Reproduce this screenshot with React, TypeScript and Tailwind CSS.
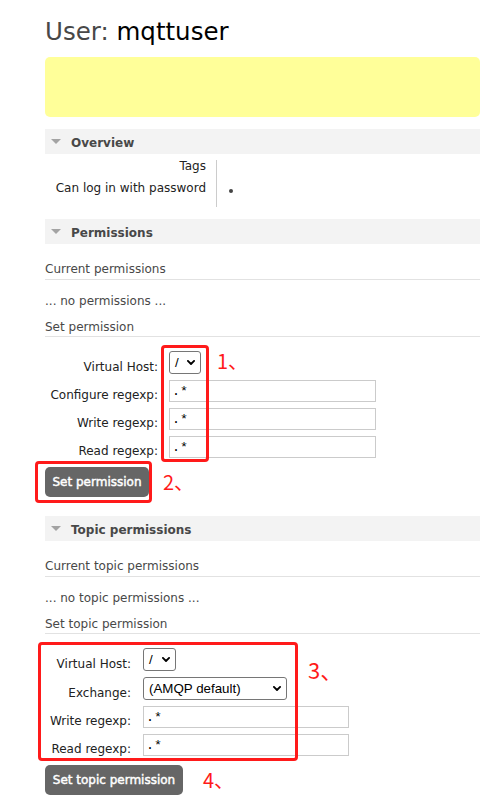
import React from "react";

const Chevron = () => (
  <svg width="8" height="5" viewBox="0 0 8 5" className="shrink-0">
    <path d="M0.9 0.9 L4 4 L7.1 0.9" stroke="#000" strokeWidth="1.8" fill="none" strokeLinecap="round" strokeLinejoin="round" />
  </svg>
);

function SectionHeader({ title }: { title: string }) {
  return (
    <div className="flex h-[25px] items-start bg-[#f3f3f3]">
      <svg className="ml-[6px] mr-[10px] self-center" width="10" height="5" viewBox="0 0 10 5">
        <path d="M0 0H10L5 5Z" fill="#a3a3a3" />
      </svg>
      <span className="font-bold leading-[28px] text-[#484848]">{title}</span>
    </div>
  );
}

function RegexInput({ w }: { w: string }) {
  return (
    <input
      readOnly
      value=".*"
      className={`${w} h-[22px] border border-[#cbcbcb] bg-white px-[2px] font-['Liberation_Mono',monospace] text-[13.33px] text-black outline-none`}
    />
  );
}

export default function App() {
  return (
    <div className="min-h-[811px] w-[480px] overflow-hidden bg-white pl-[45px] font-['DejaVu_Sans',sans-serif] text-[12px] text-[#222]">
      <h1 className="pt-[17px] text-[24.5px] leading-[30px] font-normal whitespace-nowrap">
        <span className="text-[#484848]">User: </span>
        <span className="text-black">mqttuser</span>
      </h1>

      <div className="mt-[10px] h-[60px] rounded-[5px] bg-[#ffff99]" />

      <div className="mt-[12px]">
        <SectionHeader title="Overview" />
      </div>
      <div className="mt-[6px] flex">
        <div className="w-[172px] border-r border-[#cccccc] pr-[10px] pb-[13px] text-right text-[#222]">
          <div className="leading-[12px]">Tags</div>
          <div className="mt-[10px] leading-[12px] whitespace-nowrap">Can log in with password</div>
        </div>
        <div className="pl-[12px] pt-[29px]">
          <div className="h-[3.5px] w-[3.5px] rounded-full bg-[#444]" />
        </div>
      </div>

      <div className="mt-[12px]">
        <SectionHeader title="Permissions" />
      </div>
      <h3 className="mt-[15px] border-b border-[#e2e2e2] pt-[1px] leading-[19px] text-[#484848]">Current permissions</h3>
      <p className="mt-[11px] leading-[20px] text-[#484848]">... no permissions ...</p>
      <h3 className="mt-[5px] border-b border-[#e2e2e2] pt-[3px] leading-[17px] text-[#484848]">Set permission</h3>

      <div className="relative mt-[14px] flex flex-col">
        <div className="flex items-center">
          <div className="w-[113px] pt-[8px] text-right leading-[14px]">Virtual Host:</div>
          <div className="ml-[11px] flex h-[23px] w-[32px] items-center justify-between rounded-[3px] border border-[#767676] bg-white pl-[5px] pr-[5px] font-['Liberation_Sans',Arial,sans-serif] text-[13.33px] text-black">
            <span>/</span>
            <Chevron />
          </div>
        </div>
        <div className="mt-[6px] flex items-center">
          <div className="w-[113px] pt-[8px] text-right leading-[14px] whitespace-nowrap">Configure regexp:</div>
          <div className="ml-[11px]">
            <RegexInput w="w-[207px]" />
          </div>
        </div>
        <div className="mt-[6px] flex items-center">
          <div className="w-[113px] pt-[8px] text-right leading-[14px]">Write regexp:</div>
          <div className="ml-[11px]">
            <RegexInput w="w-[207px]" />
          </div>
        </div>
        <div className="mt-[6px] flex items-center">
          <div className="w-[113px] pt-[8px] text-right leading-[14px]">Read regexp:</div>
          <div className="ml-[11px]">
            <RegexInput w="w-[207px]" />
          </div>
        </div>
        <div className="pointer-events-none absolute left-[116px] top-[-6px] h-[117px] w-[48px] rounded-[4px] border-[3px] border-[#ff1a1a]" />
        <span className="absolute left-[172px] top-[0px] font-['Noto_Sans_CJK_SC',sans-serif] text-[20px] leading-[20px] text-[#ff1a1a] whitespace-nowrap">1、</span>
      </div>

      <div className="relative mt-[9px] flex">
        <button className="h-[30px] w-[104px] rounded-[5px] bg-[#666666] text-center text-[12px] leading-[30px] text-white [-webkit-text-stroke:0.45px_white]">
          Set permission
        </button>
        <div className="pointer-events-none absolute left-[-10px] top-[-6px] h-[42px] w-[117px] rounded-[4px] border-[3px] border-[#ff1a1a]" />
        <span className="absolute left-[118px] top-[5px] font-['Noto_Sans_CJK_SC',sans-serif] text-[20px] leading-[20px] text-[#ff1a1a] whitespace-nowrap">2、</span>
      </div>

      <div className="mt-[19px]">
        <SectionHeader title="Topic permissions" />
      </div>
      <h3 className="mt-[15px] border-b border-[#e2e2e2] pt-[1px] leading-[19px] text-[#484848]">Current topic permissions</h3>
      <p className="mt-[11px] leading-[20px] text-[#484848]">... no topic permissions ...</p>
      <h3 className="mt-[5px] border-b border-[#e2e2e2] pt-[3px] leading-[17px] text-[#484848]">Set topic permission</h3>

      <div className="relative mt-[14px] flex flex-col">
        <div className="flex items-center">
          <div className="w-[86px] pt-[8px] text-right leading-[14px]">Virtual Host:</div>
          <div className="ml-[12px] flex h-[23px] w-[33px] items-center justify-between rounded-[3px] border border-[#767676] bg-white pl-[5px] pr-[5px] font-['Liberation_Sans',Arial,sans-serif] text-[13.33px] text-black">
            <span>/</span>
            <Chevron />
          </div>
        </div>
        <div className="mt-[6px] flex items-center">
          <div className="w-[86px] pt-[8px] text-right leading-[14px]">Exchange:</div>
          <div className="ml-[12px] flex h-[23px] w-[144px] items-center justify-between rounded-[3px] border border-[#767676] bg-white pl-[5px] pr-[5px] font-['Liberation_Sans',Arial,sans-serif] text-[13.33px] text-black">
            <span>(AMQP default)</span>
            <Chevron />
          </div>
        </div>
        <div className="mt-[6px] flex items-center">
          <div className="w-[86px] pt-[8px] text-right leading-[14px]">Write regexp:</div>
          <div className="ml-[12px]">
            <RegexInput w="w-[206px]" />
          </div>
        </div>
        <div className="mt-[6px] flex items-center">
          <div className="w-[86px] pt-[8px] text-right leading-[14px]">Read regexp:</div>
          <div className="ml-[12px]">
            <RegexInput w="w-[206px]" />
          </div>
        </div>
        <div className="pointer-events-none absolute left-[-7px] top-[-6px] h-[119px] w-[260px] rounded-[4px] border-[3px] border-[#ff1a1a]" />
        <span className="absolute left-[263px] top-[10px] font-['Noto_Sans_CJK_SC',sans-serif] text-[22px] leading-[22px] text-[#ff1a1a] whitespace-nowrap">3、</span>
      </div>

      <div className="relative mt-[9px] flex">
        <button className="h-[30px] w-[138px] rounded-[5px] bg-[#666666] text-center text-[12px] leading-[30px] text-white [-webkit-text-stroke:0.45px_white]">
          Set topic permission
        </button>
        <span className="absolute left-[158px] top-[5px] font-['Noto_Sans_CJK_SC',sans-serif] text-[20px] leading-[20px] text-[#ff1a1a] whitespace-nowrap">4、</span>
      </div>
    </div>
  );
}
